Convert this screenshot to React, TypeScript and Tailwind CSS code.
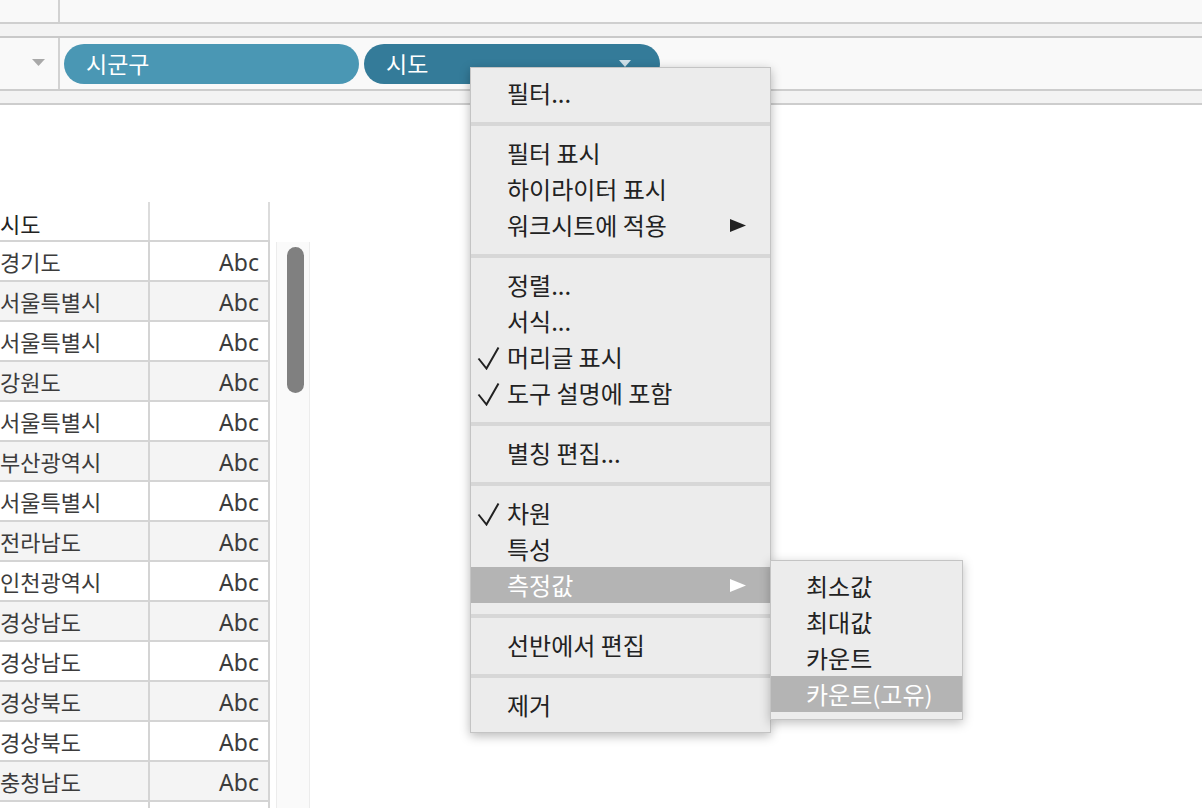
import React from "react";

const rows = [
    "경기도",
    "서울특별시",
    "서울특별시",
    "강원도",
    "서울특별시",
    "부산광역시",
    "서울특별시",
    "전라남도",
    "인천광역시",
    "경상남도",
    "경상남도",
    "경상북도",
    "경상북도",
    "충청남도",
    "",
];

type Item = { label: string; check?: boolean; arrow?: boolean; active?: boolean };

const groups: Item[][] = [
    [{ label: "필터..." }],
    [{ label: "필터 표시" }, { label: "하이라이터 표시" }, { label: "워크시트에 적용", arrow: true }],
    [
        { label: "정렬..." },
        { label: "서식..." },
        { label: "머리글 표시", check: true },
        { label: "도구 설명에 포함", check: true },
    ],
    [{ label: "별칭 편집..." }],
    [{ label: "차원", check: true }, { label: "특성" }, { label: "측정값", arrow: true, active: true }],
    [{ label: "선반에서 편집" }],
    [{ label: "제거" }],
];

const subItems = ["최소값", "최대값", "카운트", "카운트(고유)"];

const Check = () => (
    <svg className="absolute left-[6px] top-[7px]" width="24" height="24" viewBox="0 0 24 24">
        <path d="M1.5 12.5 L9.5 22.5 L21.5 1.5" fill="none" stroke="#222" strokeWidth="2" />
    </svg>
);

const Arrow = ({ color }: { color: string }) => (
    <svg className="absolute right-[24px] top-[12px]" width="16" height="13" viewBox="0 0 16 13">
        <path d="M0 0 L16 6.5 L0 13 Z" fill={color} />
    </svg>
);

const MenuRow = ({ item }: { item: Item }) => (
    <div
        className={`relative flex h-9 items-center pl-[36px] ${item.active ? "bg-[#b4b4b4] text-white" : "text-[#222]"}`}
    >
        {item.check && <Check />}
        <span>{item.label}</span>
        {item.arrow && <Arrow color={item.active ? "#ffffff" : "#222222"} />}
    </div>
);

export default function App() {
    return (
        <div
            className="relative h-screen w-full overflow-hidden bg-white"
            style={{ fontFamily: '"Noto Sans", "Noto Sans CJK KR", sans-serif' }}
        >
            {/* top strip */}
            <div className="flex h-[22px] bg-[#f9f9f9]">
                <div className="w-[60px] border-r-2 border-[#d2d2d2]" />
                <div className="flex-1" />
            </div>
            <div className="h-[2px] bg-[#cfcfcf]" />
            <div className="h-[12px] bg-[#f3f3f3]" />
            <div className="h-[2px] bg-[#c9c9c9]" />

            {/* shelf */}
            <div className="flex h-[51px] bg-[#f9f9f9]">
                <div className="flex w-[60px] items-center border-r-2 border-[#d2d2d2] pb-[2px] pl-[32px]">
                    <svg width="13" height="7" viewBox="0 0 13 7">
                        <path d="M0 0 L13 0 L6.5 7 Z" fill="#a9a9a9" />
                    </svg>
                </div>
                <div className="flex gap-[5px] pl-[4px] pt-[6px]">
                    <div className="flex h-10 w-[295px] items-center rounded-full bg-[#4a97b4] pl-[22px] text-[23px] text-white">
                        시군구
                    </div>
                    <div className="relative flex h-10 w-[296px] items-center rounded-full bg-[#347b99] pl-[22px] text-[23px] text-white">
                        시도
                        <svg width="12" height="7" viewBox="0 0 12 7" className="absolute left-[255px] top-[16px]">
                            <path d="M0 0 L12 0 L6 7 Z" fill="#cfe1ea" />
                        </svg>
                    </div>
                </div>
            </div>
            <div className="h-[2px] bg-[#cdcdcd]" />
            <div className="h-[12px] bg-[#f3f3f3]" />
            <div className="h-[2px] bg-[#cdcdcd]" />

            {/* table */}
            <div className="flex pt-[97px] text-[22px] text-[#3c3c3c]">
                <div className="w-[270px]">
                    <div className="flex h-10 border-b-2 border-[#d4d4d4]">
                        <div className="flex w-[150px] items-center border-r-2 border-[#dcdcdc] pt-[6px] text-[#222]">
                            시도
                        </div>
                        <div className="w-[120px] border-r-2 border-[#dcdcdc]" />
                    </div>
                    {rows.map((r, i) => (
                        <div
                            key={i}
                            className={`flex h-10 border-b-2 border-[#d4d4d4] ${i % 2 === 1 ? "bg-[#f4f4f4]" : "bg-white"}`}
                        >
                            <div className="flex w-[150px] items-center border-r-2 border-[#d4d4d4] pt-[2px] whitespace-nowrap">
                                {r}
                            </div>
                            <div className="flex w-[120px] items-center justify-end border-r-2 border-[#d4d4d4] pr-[9px] pt-[2px] text-[23px]">
                                {r ? "Abc" : ""}
                            </div>
                        </div>
                    ))}
                </div>
                <div className="ml-[6px] mt-10 h-[600px] w-[34px] border-x border-[#ececec] bg-[#fafafa] pl-[10px] pt-[5px]">
                    <div className="h-[146px] w-[17px] rounded-full bg-[#808080]" />
                </div>
            </div>

            {/* context menu */}
            <div
                className="absolute left-[470px] top-[67px] w-[301px] border border-[#c4c4c4] bg-[#ececec] pb-[9px] pt-[7px] text-[24px] shadow-[0_3px_10px_rgba(0,0,0,0.28)]"
                style={{ fontFamily: '"Noto Sans CJK KR", "Noto Sans", sans-serif' }}
            >
                {groups.map((g, gi) => (
                    <div key={gi}>
                        {gi > 0 && (
                            <div className="pb-[9px] pt-[11px]">
                                <div className="h-1 bg-[#d7d7d7]" />
                            </div>
                        )}
                        {g.map((it) => (
                            <MenuRow key={it.label} item={it} />
                        ))}
                    </div>
                ))}
            </div>

            {/* submenu */}
            <div
                className="absolute left-[770px] top-[560px] w-[193px] border border-[#c4c4c4] bg-[#ececec] py-[7px] text-[24px] shadow-[0_3px_10px_rgba(0,0,0,0.25)]"
                style={{ fontFamily: '"Noto Sans CJK KR", "Noto Sans", sans-serif' }}
            >
                {subItems.map((s, i) => (
                    <div
                        key={s}
                        className={`flex h-9 items-center pl-[35px] ${i === 3 ? "bg-[#b4b4b4] text-white" : "text-[#222]"}`}
                    >
                        {s}
                    </div>
                ))}
            </div>
        </div>
    );
}
